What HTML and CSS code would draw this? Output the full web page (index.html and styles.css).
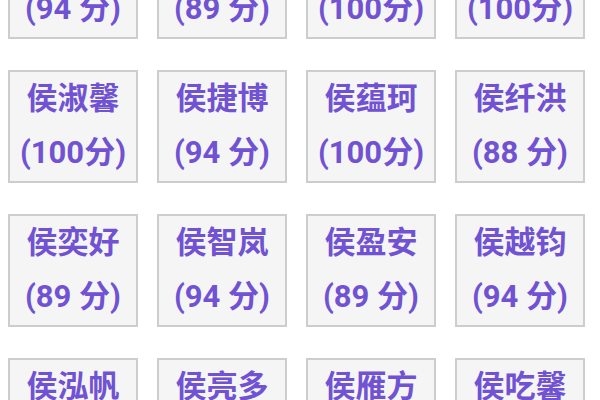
FILE: index.html
```html
<!DOCTYPE html>
<html lang="zh">
<head>
<meta charset="utf-8">
<link rel="stylesheet" href="styles.css">
</head>
<body>
<div class="grid">
  <div class="card"><div class="name">侯梓涵</div><div class="score">(94 分)</div></div>
  <div class="card"><div class="name">侯子轩</div><div class="score">(89 分)</div></div>
  <div class="card"><div class="name">侯欣怡</div><div class="score">(100分)</div></div>
  <div class="card"><div class="name">侯雨泽</div><div class="score">(100分)</div></div>

  <div class="card"><div class="name">侯淑馨</div><div class="score">(100分)</div></div>
  <div class="card"><div class="name">侯捷博</div><div class="score">(94 分)</div></div>
  <div class="card"><div class="name">侯蕴珂</div><div class="score">(100分)</div></div>
  <div class="card"><div class="name">侯纤洪</div><div class="score">(88 分)</div></div>

  <div class="card"><div class="name">侯奕好</div><div class="score">(89 分)</div></div>
  <div class="card"><div class="name">侯智岚</div><div class="score">(94 分)</div></div>
  <div class="card"><div class="name">侯盈安</div><div class="score">(89 分)</div></div>
  <div class="card"><div class="name">侯越钧</div><div class="score">(94 分)</div></div>

  <div class="card"><div class="name">侯泓帆</div><div class="score">(92 分)</div></div>
  <div class="card"><div class="name">侯亮多</div><div class="score">(90 分)</div></div>
  <div class="card"><div class="name">侯雁方</div><div class="score">(88 分)</div></div>
  <div class="card"><div class="name">侯吃馨</div><div class="score">(94 分)</div></div>
</div>
</body>
</html>
```
FILE: styles.css
```css
html, body {
  margin: 0;
  padding: 0;
  background: #ffffff;
  overflow: hidden;
}
body {
  padding-left: 8px;
  font-family: Roboto, "Noto Sans CJK SC", sans-serif;
}
.grid {
  display: grid;
  grid-template-columns: repeat(4, 130px);
  column-gap: 19px;
  row-gap: 31px;
  margin-top: -74px;
}
.card {
  box-sizing: border-box;
  height: 113px;
  border: 2px solid #cdcdcd;
  background: #f5f5f6;
  text-align: center;
  color: #7052d2;
  font-weight: 700;
  font-size: 31px;
  line-height: 54px;
  padding-top: 0;
}
.name, .score {
  white-space: nowrap;
}
```
